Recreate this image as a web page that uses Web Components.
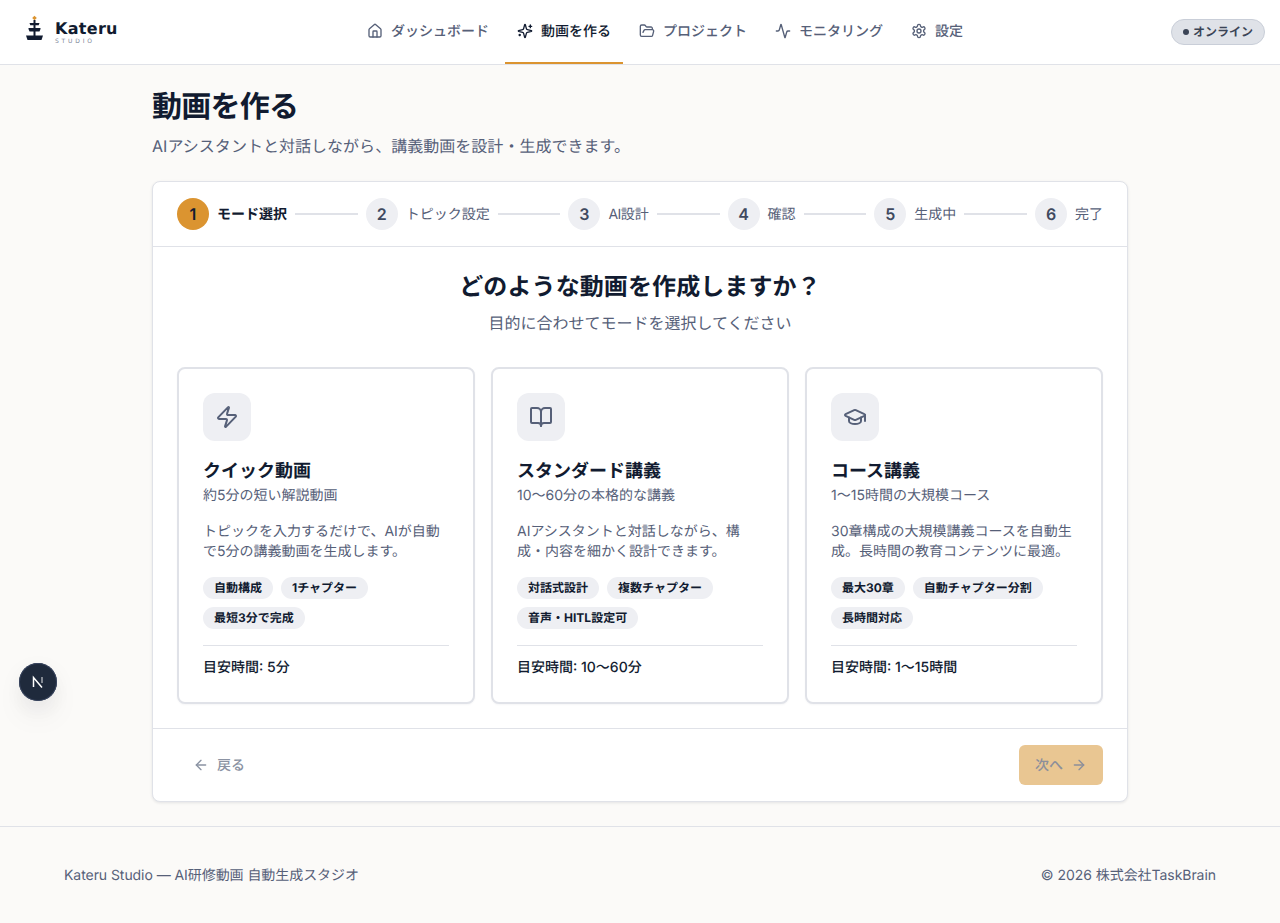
<!DOCTYPE html>
<html lang="ja">
<head>
<meta charset="utf-8">
<title>動画を作る</title>
<style>
html,body{margin:0;padding:0;}
body{background:#fbfaf8;font-family:Inter,"Noto Sans CJK JP","Noto Sans",sans-serif;color:#111b30;text-rendering:geometricPrecision;}
</style>
</head>
<body>
<app-shell>
  <site-header slot="header">
    <nav-item icon="house">ダッシュボード</nav-item>
    <nav-item icon="sparkles" active>動画を作る</nav-item>
    <nav-item icon="folder">プロジェクト</nav-item>
    <nav-item icon="activity">モニタリング</nav-item>
    <nav-item icon="settings">設定</nav-item>
  </site-header>
  <page-title heading="動画を作る" sub="AIアシスタントと対話しながら、講義動画を設計・生成できます。"></page-title>
  <wizard-card>
    <step-bar slot="steps">
      <step-item n="1" active>モード選択</step-item>
      <step-item n="2">トピック設定</step-item>
      <step-item n="3"><span style="letter-spacing:-.5px">AI</span>設計</step-item>
      <step-item n="4">確認</step-item>
      <step-item n="5">生成中</step-item>
      <step-item n="6" last>完了</step-item>
    </step-bar>
    <mode-card icon="zap" name="クイック動画" tagline="約5分の短い解説動画" time="目安時間: 5分">
      トピックを入力するだけで、AIが自動で5分の講義動画を生成します。
      <tag-pill slot="tags">自動構成</tag-pill><tag-pill slot="tags">1チャプター</tag-pill><tag-pill slot="tags">最短3分で完成</tag-pill>
    </mode-card>
    <mode-card icon="book" name="スタンダード講義" tagline="10〜60分の本格的な講義" time="目安時間: 10〜60分">
      AIアシスタントと対話しながら、構成・内容を細かく設計できます。
      <tag-pill slot="tags">対話式設計</tag-pill><tag-pill slot="tags">複数チャプター</tag-pill><tag-pill slot="tags">音声・HITL設定可</tag-pill>
    </mode-card>
    <mode-card icon="cap" name="コース講義" tagline="1〜15時間の大規模コース" time="目安時間: 1〜15時間">
      30章構成の大規模講義コースを自動生成。長時間の教育コンテンツに最適。
      <tag-pill slot="tags">最大30章</tag-pill><tag-pill slot="tags">自動チャプター分割</tag-pill><tag-pill slot="tags">長時間対応</tag-pill>
    </mode-card>
  </wizard-card>
  <site-footer></site-footer>
  <dev-badge></dev-badge>
</app-shell>
<script>
const ICONS={
house:'<path d="M15 21v-8a1 1 0 0 0-1-1h-4a1 1 0 0 0-1 1v8"/><path d="M3 10a2 2 0 0 1 .709-1.528l7-5.999a2 2 0 0 1 2.582 0l7 5.999A2 2 0 0 1 21 10v9a2 2 0 0 1-2 2H5a2 2 0 0 1-2-2z"/>',
sparkles:'<path d="M9.937 15.5A2 2 0 0 0 8.5 14.063l-6.135-1.582a.5.5 0 0 1 0-.962L8.5 9.936A2 2 0 0 0 9.937 8.5l1.582-6.135a.5.5 0 0 1 .963 0L14.063 8.5A2 2 0 0 0 15.5 9.937l6.135 1.581a.5.5 0 0 1 0 .964L15.5 14.063a2 2 0 0 0-1.437 1.437l-1.582 6.135a.5.5 0 0 1-.963 0z"/><path d="M20 3v4"/><path d="M22 5h-4"/><path d="M4 17v2"/><path d="M5 18H3"/>',
folder:'<path d="m6 14 1.5-2.9A2 2 0 0 1 9.24 10H20a2 2 0 0 1 1.94 2.5l-1.54 6a2 2 0 0 1-1.95 1.5H4a2 2 0 0 1-2-2V5a2 2 0 0 1 2-2h3.9a2 2 0 0 1 1.69.9l.81 1.2a2 2 0 0 0 1.67.9H18a2 2 0 0 1 2 2v2"/>',
activity:'<path d="M22 12h-2.48a2 2 0 0 0-1.93 1.46l-2.35 8.36a.25.25 0 0 1-.48 0L9.24 2.18a.25.25 0 0 0-.48 0l-2.35 8.36A2 2 0 0 1 4.49 12H2"/>',
settings:'<path d="M12.22 2h-.44a2 2 0 0 0-2 2v.18a2 2 0 0 1-1 1.73l-.43.25a2 2 0 0 1-2 0l-.15-.08a2 2 0 0 0-2.73.73l-.22.38a2 2 0 0 0 .73 2.73l.15.1a2 2 0 0 1 1 1.72v.51a2 2 0 0 1-1 1.74l-.15.09a2 2 0 0 0-.73 2.73l.22.38a2 2 0 0 0 2.73.73l.15-.08a2 2 0 0 1 2 0l.43.25a2 2 0 0 1 1 1.73V20a2 2 0 0 0 2 2h.44a2 2 0 0 0 2-2v-.18a2 2 0 0 1 1-1.73l.43-.25a2 2 0 0 1 2 0l.15.08a2 2 0 0 0 2.73-.73l.22-.39a2 2 0 0 0-.73-2.73l-.15-.08a2 2 0 0 1-1-1.74v-.5a2 2 0 0 1 1-1.74l.15-.09a2 2 0 0 0 .73-2.73l-.22-.38a2 2 0 0 0-2.73-.73l-.15.08a2 2 0 0 1-2 0l-.43-.25a2 2 0 0 1-1-1.73V4a2 2 0 0 0-2-2z"/><circle cx="12" cy="12" r="3"/>',
zap:'<path d="M4 14a1 1 0 0 1-.78-1.63l9.9-10.2a.5.5 0 0 1 .86.46l-1.92 6.02A1 1 0 0 0 13 10h7a1 1 0 0 1 .78 1.63l-9.9 10.2a.5.5 0 0 1-.86-.46l1.92-6.02A1 1 0 0 0 11 14z"/>',
book:'<path d="M12 7v14"/><path d="M3 18a1 1 0 0 1-1-1V4a1 1 0 0 1 1-1h5a4 4 0 0 1 4 4 4 4 0 0 1 4-4h5a1 1 0 0 1 1 1v13a1 1 0 0 1-1 1h-6a3 3 0 0 0-3 3 3 3 0 0 0-3-3z"/>',
cap:'<path d="M21.42 10.922a1 1 0 0 0-.019-1.838L12.83 5.18a2 2 0 0 0-1.66 0L2.6 9.08a1 1 0 0 0 0 1.832l8.57 3.908a2 2 0 0 0 1.66 0z"/><path d="M22 10v6"/><path d="M6 12.5V16a6 3 0 0 0 12 0v-3.5"/>',
left:'<path d="m12 19-7-7 7-7"/><path d="M19 12H5"/>',
right:'<path d="M5 12h14"/><path d="m12 5 7 7-7 7"/>'
};
customElements.define('ui-icon',class extends HTMLElement{
  static get observedAttributes(){return ['name'];}
  constructor(){super();this.attachShadow({mode:'open'}).innerHTML=`<style>:host{display:inline-flex;flex:none;width:var(--s,16px);height:var(--s,16px)}svg{width:100%;height:100%;fill:none;stroke:currentColor;stroke-width:2;stroke-linecap:round;stroke-linejoin:round}</style><svg viewBox="0 0 24 24"></svg>`;}
  attributeChangedCallback(a,o,v){this.shadowRoot.querySelector('svg').innerHTML=ICONS[v]||'';}
});
function define(name,html,extra){
  const t=document.createElement('template');t.innerHTML=html;
  customElements.define(name,class extends HTMLElement{
    constructor(){super();this.attachShadow({mode:'open'}).appendChild(t.content.cloneNode(true));}
    connectedCallback(){if(extra)extra.call(this,this.shadowRoot);}
  });
}
define('app-shell',`<style>:host{display:block}main{display:block;width:976px;margin:0 auto;padding:24px 0}</style><slot name="header"></slot><main><slot></slot></main>`);

define('site-header',`<style>
:host{display:flex;align-items:center;height:64px;border-bottom:1px solid #e0e2e8;background:#fff;padding:0 15px 0 24px;box-sizing:content-box}
.logo{display:flex;align-items:center;gap:9px;width:331px;flex:none}
.logo svg{width:22px;height:26px;flex:none;margin-top:-6px;overflow:visible}
.w{display:flex;flex-direction:column;line-height:1;margin-top:2px}
.k{font-size:16px;font-weight:700;color:#111b30;line-height:17px;letter-spacing:.3px;font-family:"DejaVu Sans",sans-serif}
.s{font-size:6px;letter-spacing:2.8px;color:#7d8597;line-height:8px;margin-top:1px;font-family:"DejaVu Sans",sans-serif}
nav{display:flex;gap:4px;height:64px}
.badge{margin-left:auto;display:flex;align-items:center;gap:4px;padding:0 11px 1px;box-sizing:content-box;height:23px;border:1px solid #c9ced8;border-radius:13px;background:#dfe2e8;font-size:12px;font-weight:700;color:#3b4456}
.dot{width:6px;height:6px;border-radius:50%;background:#3b4456}
</style>
<div class="logo"><svg viewBox="0 0 22 26"><path d="M10.500 -.3l2.300 2.300L10.500 4.300 8.200 2z" fill="#db9430"/><rect x="9.500" y="4" width="2" height="18" fill="#111b30"/><path d="M5.500 7h10l-.8 2.300H6.300z" fill="#111b30"/><path d="M4.500 12h12v1l-1 2.500h-10l-1-2.500z" fill="#111b30"/><path d="M2 19.500h17l-1.500 4.500h-14z" fill="#111b30"/></svg>
<div class="w"><span class="k">Kateru</span><span class="s">STUDIO</span></div></div>
<nav><slot></slot></nav>
<div class="badge"><span class="dot"></span>オンライン</div>`);

define('nav-item',`<style>
:host{display:flex;align-items:center;gap:8px;padding:0 12px 1px;font-size:14px;font-weight:500;color:#566078;height:64px;box-sizing:border-box;border-bottom:2px solid transparent}
:host([active]){color:#111b30;border-bottom-color:#db9430}
</style><ui-icon></ui-icon><slot></slot>`,function(r){r.querySelector('ui-icon').setAttribute('name',this.getAttribute('icon'));});

define('page-title',`<style>:host{display:block;margin-bottom:23px}h1{margin:0;font-size:30px;font-weight:700;line-height:36px;color:#111b30;letter-spacing:-.75px}p{margin:9px 0 0;font-size:16px;line-height:24px;color:#566078;letter-spacing:.03px}</style><h1></h1><p></p>`,function(r){r.querySelector('h1').textContent=this.getAttribute('heading');r.querySelector('p').textContent=this.getAttribute('sub');});

define('wizard-card',`<style>
:host{display:block;background:#fff;border:1px solid #e0e2e8;border-radius:8px;box-shadow:0 1px 3px rgba(17,27,48,.1);overflow:hidden}
.body{padding:24px;border-top:1px solid #e0e2e8}
h2{margin:0;text-align:center;font-size:24px;line-height:32px;font-weight:700;color:#111b30;letter-spacing:.1px}
.sub{margin:8px 0 0;text-align:center;font-size:16px;line-height:24px;color:#566078}
.grid{display:grid;grid-template-columns:repeat(3,1fr);gap:16px;margin-top:32px}
.foot{display:flex;justify-content:space-between;align-items:center;border-top:1px solid #e0e2e8;padding:16px 24px}
.btn{display:flex;align-items:center;gap:8px;height:40px;padding:0 16px;border-radius:6px;font-size:14px;font-weight:500;color:#8b93a3}
.next{background:#e9c692;color:#8c8f9b}
</style>
<slot name="steps"></slot>
<div class="body"><h2>どのような動画を作成しますか？</h2><p class="sub">目的に合わせてモードを選択してください</p><div class="grid"><slot></slot></div></div>
<div class="foot"><div class="btn"><ui-icon name="left"></ui-icon>戻る</div><div class="btn next">次へ<ui-icon name="right"></ui-icon></div></div>`);

define('step-bar',`<style>:host{display:flex;align-items:center;padding:16px 24px;gap:8px}</style><slot></slot>`);
define('step-item',`<style>
:host{display:flex;align-items:center;gap:8px;flex:1 1 auto;font-size:14px;color:#566078}
:host([last]){flex:none}
:host([active]){color:#111b30;font-weight:700}
.c{width:32px;height:32px;border-radius:50%;background:#eeeff3;color:#3f4a60;display:flex;align-items:center;justify-content:center;font-size:16px;font-weight:600;flex:none}
:host([active]) .c{background:#db9430;color:#111b30}
.l{white-space:nowrap;line-height:20px;padding-top:2px}
.b{flex:1;height:2px;background:#e0e2e8;min-width:20px}
:host([last]) .b{display:none}
</style><span class="c"></span><span class="l"><slot></slot></span><span class="b"></span>`,function(r){r.querySelector('.c').textContent=this.getAttribute('n');});

define('mode-card',`<style>
:host{display:flex;flex-direction:column;border:2px solid #e0e2e8;border-radius:8px;padding:24px;background:#fff;box-shadow:0 1px 2px rgba(17,27,48,.04)}
.i{width:48px;height:48px;border-radius:12px;background:#eeeff3;color:#566078;display:flex;align-items:center;justify-content:center;--s:24px}
h3{margin:17px 0 -1px;font-size:18px;line-height:28px;font-weight:700;color:#111b30}
.t{font-size:14px;line-height:20px;color:#566078;margin-top:1px}
.d{font-size:14px;line-height:20px;color:#566078;margin-top:16px}
.tags{display:flex;flex-wrap:wrap;gap:8px;margin-top:15px}
.f{margin-top:16px;padding-top:12px;border-top:1px solid #e0e2e8;font-size:14px;line-height:20px;font-weight:500;color:#111b30}
</style>
<div class="i"><ui-icon></ui-icon></div><h3></h3><div class="t"></div><div class="d"><slot></slot></div><div class="tags"><slot name="tags"></slot></div><div class="f"></div>`,function(r){
r.querySelector('ui-icon').setAttribute('name',this.getAttribute('icon'));
r.querySelector('h3').textContent=this.getAttribute('name');
r.querySelector('.t').textContent=this.getAttribute('tagline');
r.querySelector('.f').textContent=this.getAttribute('time');});
define('tag-pill',`<style>:host{display:inline-flex;align-items:center;height:22px;box-sizing:border-box;padding:0 11px 2px;border-radius:11px;background:#eeeff3;font-size:12px;font-weight:700;color:#111b30}</style><slot></slot>`);

define('site-footer',`<style>
:host{display:flex;justify-content:space-between;align-items:center;border-top:1px solid #e0e2e8;margin:24px calc((976px - 1280px)/2) -24px;padding:39px 64px 37px;font-size:14px;line-height:20px;color:#566078}
.a{letter-spacing:-.06px}.b{letter-spacing:-.05px}
</style><span class="a">Kateru Studio — AI研修動画 自動生成スタジオ</span><span class="b">© 2026 株式会社TaskBrain</span>`);

define('dev-badge',`<style>
:host{position:fixed;left:19px;top:663px;width:38px;height:38px;border-radius:50%;background:#1f2a3c;box-shadow:0 0 0 1px #3a4660 inset,0 16px 32px -8px rgba(17,27,48,.15),0 8px 24px rgba(17,27,48,.06);display:flex;align-items:center;justify-content:center}
svg{width:14px;height:14px;fill:none;stroke:#fff;stroke-width:1.5}
</style><svg viewBox="0 0 14 14"><path d="M2.500 12V2.500L11 12.500"/><path d="M11 2v6" stroke-opacity=".6"/></svg>`);
</script>
</body>
</html>
